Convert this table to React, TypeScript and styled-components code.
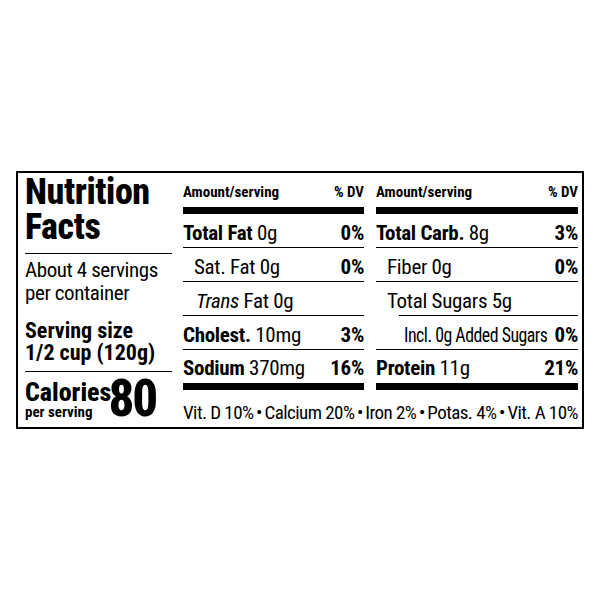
import React from "react";
import styled, { createGlobalStyle } from "styled-components";

const Global = createGlobalStyle`
  * { box-sizing: border-box; }
  html, body { margin: 0; padding: 0; background: #fff; }
  body {
    font-family: "Roboto Condensed", "Liberation Sans", Arial, sans-serif;
    color: #000;
  }
`;

const Page = styled.div`
  width: 600px;
  height: 600px;
  padding: 171px 0 0 16px;
`;

const Label = styled.div`
  width: 568px;
  height: 258px;
  border: 2px solid #000;
  padding: 0 4px 0 7px;
  display: flex;
  gap: 11px;
  white-space: nowrap;
`;

const LeftCol = styled.div`
  width: 147px;
  flex: none;
  display: flex;
  flex-direction: column;
`;

const Title = styled.div`
  font-weight: 800;
  font-size: 36px;
  line-height: 35px;
  letter-spacing: -0.4px;
  padding: 2px 0 8px;
  border-bottom: 1.5px solid #000;
`;

const Servings = styled.div`
  font-size: 21px;
  line-height: 23px;
  letter-spacing: -0.4px;
  padding-top: 5px;
`;

const ServingSize = styled.div`
  font-weight: 700;
  font-size: 22px;
  line-height: 22px;
  margin-top: 15px;
  padding-bottom: 7px;
  border-bottom: 1.5px solid #000;
`;

const CaloriesRow = styled.div`
  display: flex;
  align-items: flex-end;
  padding-top: 5px;
  gap: 0;
`;

const CalLabel = styled.div`
  display: flex;
  flex-direction: column;
  font-weight: 700;
`;

const CalWord = styled.span`
  font-size: 26px;
  line-height: 24px;
  font-weight: 800;
`;

const PerServing = styled.span`
  font-size: 15px;
  line-height: 17px;
`;

const CalNumber = styled.span`
  font-weight: 800;
  font-size: 51px;
  line-height: 44px;
  letter-spacing: -2px;
  margin-left: -3px;
`;

const RightArea = styled.div`
  width: 395px;
  flex: none;
  display: grid;
  grid-template-columns: 181px 202px;
  grid-template-rows: auto auto;
  column-gap: 12px;
`;

const Column = styled.div`
  display: flex;
  flex-direction: column;
`;

const Header = styled.div`
  box-sizing: content-box;
  height: 27px;
  display: flex;
  justify-content: space-between;
  align-items: flex-end;
  padding-bottom: 7px;
  font-weight: 700;
  font-size: 15px;
  line-height: 15px;
  border-bottom: 7px solid #000;
`;

const Row = styled.div<{ $indent?: number; $lineIndent?: number; $last?: boolean }>`
  height: 34px;
  display: flex;
  justify-content: space-between;
  align-items: center;
  padding: 3px 0 0 ${(p) => p.$indent ?? 0}px;
  font-size: 21px;
  letter-spacing: -0.3px;
  position: relative;
  ${(p) =>
    p.$last
      ? `box-sizing: content-box; height: 30px; border-bottom: 7px solid #000;`
      : `&::after {
    content: "";
    position: absolute;
    left: ${p.$lineIndent ?? 0}px;
    right: 0;
    bottom: 0;
    height: 1.5px;
    background: #000;
  }`}
`;

const Squeeze = styled.span`
  display: inline-block;
  width: 141px;
  letter-spacing: -0.6px;
  transform: scaleX(0.85);
  transform-origin: left center;
`;

const B = styled.b`
  font-weight: 700;
`;

const I = styled.i`
  font-style: italic;
`;

const Pct = styled.span`
  font-weight: 700;
`;

const Footer = styled.div`
  grid-column: 1 / span 2;
  display: flex;
  justify-content: space-between;
  align-items: center;
  padding-top: 1px;
  font-size: 19px;
  line-height: 20px;
  letter-spacing: -0.55px;
  white-space: nowrap;
`;

const Dot = styled.span`
  font-size: 19px;
`;

const nutrients = ["Vit. D 10%", "Calcium 20%", "Iron 2%", "Potas. 4%", "Vit. A 10%"];

export default function App() {
  return (
    <>
      <Global />
      <Page>
        <Label>
          <LeftCol>
            <Title>
              Nutrition
              <br />
              Facts
            </Title>
            <Servings>
              About 4 servings
              <br />
              per container
            </Servings>
            <ServingSize>
              Serving size
              <br />
              1/2 cup (120g)
            </ServingSize>
            <CaloriesRow>
              <CalLabel>
                <CalWord>Calories</CalWord>
                <PerServing>per serving</PerServing>
              </CalLabel>
              <CalNumber>80</CalNumber>
            </CaloriesRow>
          </LeftCol>
          <RightArea>
            <Column>
              <Header>
                <span>Amount/serving</span>
                <span>% DV</span>
              </Header>
              <Row>
                <span>
                  <B>Total Fat</B> 0g
                </span>
                <Pct>0%</Pct>
              </Row>
              <Row $indent={11}>
                <span>Sat. Fat 0g</span>
                <Pct>0%</Pct>
              </Row>
              <Row $indent={13}>
                <span>
                  <I>Trans</I> Fat 0g
                </span>
              </Row>
              <Row>
                <span>
                  <B>Cholest.</B> 10mg
                </span>
                <Pct>3%</Pct>
              </Row>
              <Row $last>
                <span>
                  <B>Sodium</B> 370mg
                </span>
                <Pct>16%</Pct>
              </Row>
            </Column>
            <Column>
              <Header>
                <span>Amount/serving</span>
                <span>% DV</span>
              </Header>
              <Row>
                <span>
                  <B>Total Carb.</B> 8g
                </span>
                <Pct>3%</Pct>
              </Row>
              <Row $indent={11}>
                <span>Fiber 0g</span>
                <Pct>0%</Pct>
              </Row>
              <Row $indent={11} $lineIndent={23}>
                <span>Total Sugars 5g</span>
              </Row>
              <Row $indent={28}>
                <Squeeze>Incl. 0g Added Sugars</Squeeze>
                <Pct>0%</Pct>
              </Row>
              <Row $last>
                <span>
                  <B>Protein</B> 11g
                </span>
                <Pct>21%</Pct>
              </Row>
            </Column>
            <Footer>
              {nutrients.map((n, i) => (
                <React.Fragment key={n}>
                  {i > 0 && <Dot>•</Dot>}
                  <span>{n}</span>
                </React.Fragment>
              ))}
            </Footer>
          </RightArea>
        </Label>
      </Page>
    </>
  );
}
